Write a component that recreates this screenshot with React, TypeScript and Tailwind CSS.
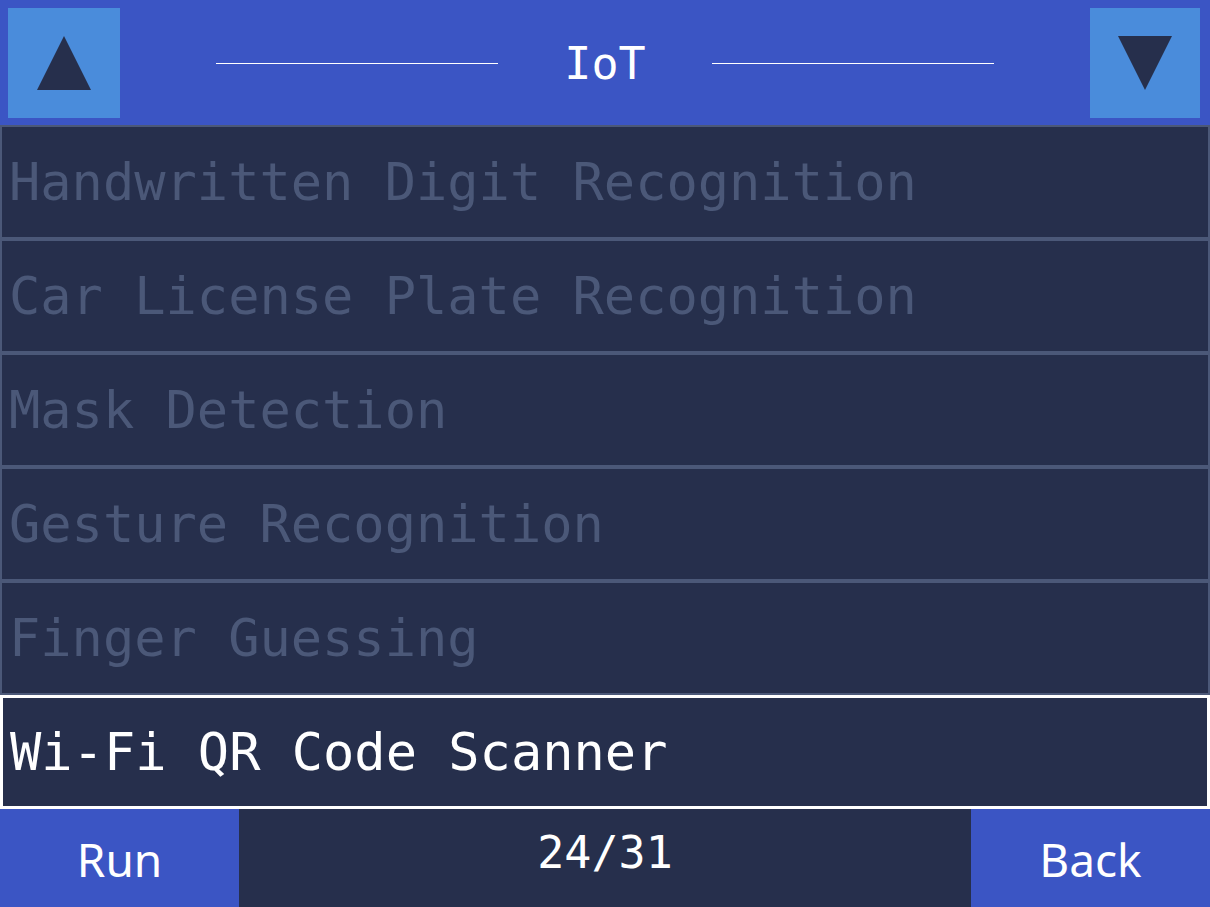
import React from 'react';

const mono = { fontFamily: '"DejaVu Sans Mono", "Liberation Mono", monospace' };
const sans = { fontFamily: '"Noto Sans", "Open Sans", sans-serif' };

export default function App() {
  const items = [
    'Handwritten Digit Recognition',
    'Car License Plate Recognition',
    'Mask Detection',
    'Gesture Recognition',
    'Finger Guessing',
    'Wi-Fi QR Code Scanner',
  ];
  const selected = 5;

  return (
    <div className="w-[1210px] h-[907px] flex flex-col bg-[#262f4c] overflow-hidden">
      {/* header */}
      <div className="h-[125px] shrink-0 bg-[#3b55c4] flex items-start justify-between pl-2 pr-[10px] pt-2">
        <button className="w-[112px] h-[110px] bg-[#4a8cdb] flex items-center justify-center">
          <svg width="54" height="54" viewBox="0 0 54 54">
            <polygon points="27,0 54,54 0,54" fill="#262f4c" />
          </svg>
        </button>
        <div className="flex-1 h-[110px] flex items-center justify-center gap-[66px]">
          <div className="w-[282px] h-px bg-white" />
          <span className="text-white text-[45px] leading-none" style={mono}>IoT</span>
          <div className="w-[282px] h-px bg-white" />
        </div>
        <button className="w-[110px] h-[110px] bg-[#4a8cdb] flex items-center justify-center">
          <svg width="54" height="54" viewBox="0 0 54 54">
            <polygon points="0,0 54,0 27,54" fill="#262f4c" />
          </svg>
        </button>
      </div>

      {/* list */}
      <div className="flex flex-col">
        {items.map((item, i) => (
          <div
            key={item}
            className={`h-[114px] flex items-center px-[7px] ${
              i === selected
                ? 'border-[3px] border-white text-white'
                : 'border-2 border-[#4b5878] text-[#4b5878]'
            }`}
          >
            <span className="text-[52px] leading-none whitespace-nowrap" style={mono}>
              {item}
            </span>
          </div>
        ))}
      </div>

      {/* footer */}
      <div className="flex-1 flex">
        <button className="w-[239px] bg-[#3b55c4] text-white text-[46px] flex items-center justify-center pt-[2px]" style={sans}>
          Run
        </button>
        <div className="flex-1 flex items-start justify-center pt-[10px] text-white text-[45px]" style={mono}>
          24/31
        </div>
        <button className="w-[239px] bg-[#3b55c4] text-white text-[46px] flex items-center justify-center pt-[2px]" style={sans}>
          Back
        </button>
      </div>
    </div>
  );
}
